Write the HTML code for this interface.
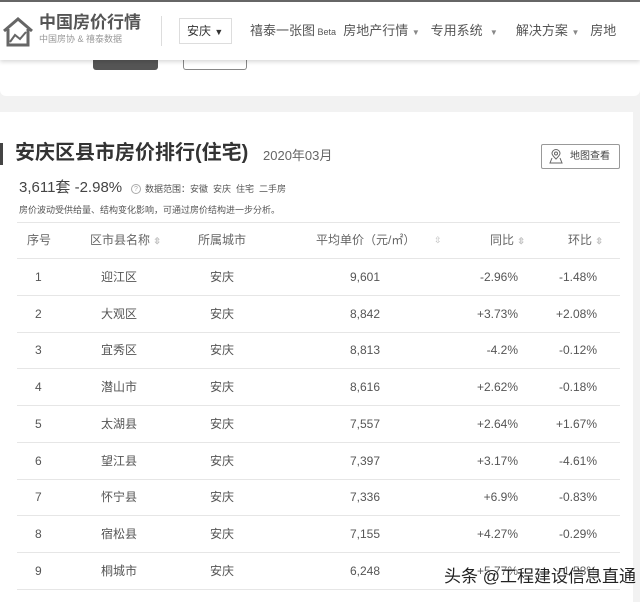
<!DOCTYPE html>
<html><head><meta charset="utf-8"><style>
*{margin:0;padding:0;box-sizing:border-box}
body{width:640px;height:602px;overflow:hidden;background:#f2f2f2;font-family:"Liberation Sans","Noto Sans CJK SC",sans-serif;color:#333;position:relative}
.abs{position:absolute;white-space:nowrap}
.hdr{position:absolute;left:0;top:0;width:640px;height:60px;background:#fff;border-top:2px solid #666;box-shadow:0 2px 4px rgba(0,0,0,.15);z-index:2}
.top2{position:absolute;left:0;top:58px;width:640px;height:38px;background:#fff;border-radius:0 0 6px 6px}
.card{position:absolute;left:0;top:112px;width:633px;height:490px;background:#fff}
.row{position:absolute;left:17px;width:603px;height:37px;border-bottom:1px solid #e6e6e6;font-size:12px;color:#555}
.row span{position:absolute;top:11px;line-height:14px;height:14px}
.s{color:#bbb;font-size:9px}
</style></head><body>
<div class="top2">
 <div class="abs" style="left:93px;top:2px;width:65px;height:10px;background:#555;border-radius:0 0 3px 3px"></div>
 <div class="abs" style="left:183px;top:2px;width:64px;height:10px;border:1px solid #888;border-top:none;border-radius:0 0 3px 3px"></div>
</div>
<div class="hdr">
 <svg class="abs" style="left:2px;top:14px" width="32" height="32" viewBox="0 0 32 32" fill="none" stroke="#666" stroke-width="3"><path d="M2 15 L16 3 L30 15"/><path d="M6 13 V29 H26 V13"/><path d="M8 26 L13 19 L18 23 L24 16" stroke-width="2"/></svg>
 <div class="abs" style="left:39px;top:11px;font-size:17px;line-height:20px;font-weight:bold;color:#555">中国房价行情</div>
 <div class="abs" style="left:39px;top:32px;font-size:9px;line-height:11px;color:#999">中国房协 &amp; 禧泰数据</div>
 <div class="abs" style="left:161px;top:14px;width:1px;height:30px;background:#ddd"></div>
 <div class="abs" style="left:179px;top:16px;width:53px;height:26px;border:1px solid #ddd;font-size:12px;line-height:14px;padding:5px 7px">安庆 <span style="font-size:9px">▼</span></div>
 <div class="abs" style="left:250px;top:21px;font-size:13px;line-height:16px;color:#555">禧泰一张图<span style="font-size:9px"> Beta</span>&nbsp; 房地产行情 <span style="font-size:8px;color:#888">▼</span>&nbsp;&nbsp; 专用系统 &nbsp;<span style="font-size:8px;color:#888">▼</span>&nbsp;&nbsp;&nbsp;&nbsp; 解决方案 <span style="font-size:8px;color:#888">▼</span>&nbsp;&nbsp; 房地</div>
</div>
<div class="card">
 <div class="abs" style="left:0;top:31px;width:3px;height:22px;background:#444"></div>
 <div class="abs" style="left:15px;top:29px;font-size:20px;line-height:24px;font-weight:bold;color:#333">安庆区县市房价排行(住宅)</div>
 <div class="abs" style="left:263px;top:36px;font-size:13px;line-height:16px;color:#666">2020年03月</div>
 <div class="abs" style="left:541px;top:32px;width:79px;height:25px;border:1px solid #999;border-radius:2px;font-size:10px;line-height:12px;padding:6px 0 0 28px;color:#444">地图查看</div>
 <svg class="abs" style="left:549px;top:37px" width="14" height="15" viewBox="0 0 14 15" fill="none" stroke="#666"><path d="M7 10 C3 6 3 5 3 4.5 A4 4 0 0 1 11 4.5 C11 5 11 6 7 10Z"/><circle cx="7" cy="4.5" r="1.5"/><path d="M3 9 L1 14 H13 L11 9"/></svg>
 <div class="abs" style="left:19px;top:67px;font-size:15px;line-height:18px;color:#444">3,611套 -2.98%</div>
 <div class="abs" style="left:131px;top:72px;width:10px;height:10px;border:1px solid #aaa;border-radius:50%;font-size:7px;text-align:center;line-height:9px;color:#aaa">?</div>
 <div class="abs" style="left:145px;top:72px;font-size:9px;line-height:11px;color:#555">数据范围：安徽&nbsp; 安庆&nbsp; 住宅&nbsp; 二手房</div>
 <div class="abs" style="left:19px;top:93px;font-size:9px;line-height:11px;color:#555">房价波动受供给量、结构变化影响，可通过房价结构进一步分析。</div>
 <div class="abs" style="left:17px;top:110px;width:603px;height:1px;background:#e6e6e6"></div>
 <div class="row" style="top:110px;color:#666">
  <span style="left:10px">序号</span><span style="left:73px">区市县名称 <b class="s">⇳</b></span><span style="left:181px">所属城市</span><span style="left:299px">平均单价（元/㎡）</span><span style="left:417px" class="s">⇳</span><span style="left:473px">同比 <b class="s">⇳</b></span><span style="left:551px">环比 <b class="s">⇳</b></span>
 </div>
</div>
<div id="rows"></div>
<script>
var d=[["1","迎江区","9,601","-2.96%","-1.48%"],["2","大观区","8,842","+3.73%","+2.08%"],["3","宜秀区","8,813","-4.2%","-0.12%"],["4","潜山市","8,616","+2.62%","-0.18%"],["5","太湖县","7,557","+2.64%","+1.67%"],["6","望江县","7,397","+3.17%","-4.61%"],["7","怀宁县","7,336","+6.9%","-0.83%"],["8","宿松县","7,155","+4.27%","-0.29%"],["9","桐城市","6,248","+5.77%","+1.58%"]];
var h="";d.forEach(function(r,i){var t=259+i*36.7;h+='<div class="row" style="top:'+t+'px"><span style="left:18px">'+r[0]+'</span><span style="left:84px">'+r[1]+'</span><span style="left:193px">安庆</span><span style="right:240px">'+r[2]+'</span><span style="right:102px">'+r[3]+'</span><span style="right:23px">'+r[4]+'</span></div>';});
document.getElementById("rows").innerHTML=h;
</script>
<div class="abs" style="left:444px;top:567px;font-size:17px;line-height:20px;color:#222;text-shadow:0 0 2px #fff,0 0 2px #fff">头条 @工程建设信息直通</div>
</body></html>
